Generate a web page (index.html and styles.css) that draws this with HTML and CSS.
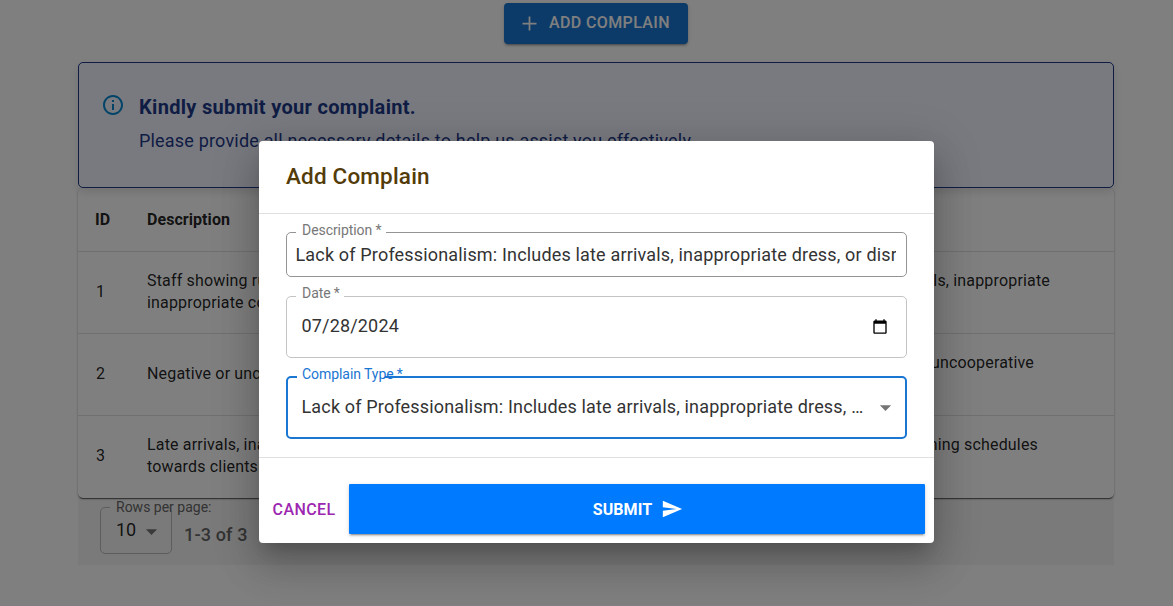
FILE: index.html
```html
<!DOCTYPE html>
<html lang="en">
<head>
<meta charset="utf-8">
<title>Complaints</title>
<link rel="stylesheet" href="styles.css">
</head>
<body>
<main class="page">
  <button class="add-btn"><svg class="plus" viewBox="0 0 24 24"><path d="M20 13h-7v7h-2v-7H4v-2h7V4h2v7h7v2z"/></svg><span>ADD COMPLAIN</span></button>
  <section class="notice">
    <svg class="info" viewBox="0 0 24 24"><path d="M11 7h2v2h-2zm0 4h2v6h-2zm1-9C6.480 2 2 6.480 2 12s4.480 10 10 10 10-4.480 10-10S17.520 2 12 2zm0 18c-4.410 0-8-3.590-8-8s3.590-8 8-8 8 3.590 8 8-3.590 8-8 8z"/></svg>
    <div class="notice-body">
      <h2 class="notice-title">Kindly submit your complaint.</h2>
      <p class="notice-text">Please provide all necessary details to help us assist you effectively.</p>
    </div>
  </section>
  <section class="table">
    <div class="row head"><span>ID</span><span>Description</span></div>
    <div class="row"><span>1</span><span>Staff showing rudeness or<br>inappropriate conduct.</span><span class="type">Includes late arrivals, inappropriate<br>&nbsp;</span></div>
    <div class="row"><span>2</span><span>Negative or uncooperative</span><span class="type type-b">Negative or uncooperative<br>&nbsp;</span></div>
    <div class="row"><span>3</span><span>Late arrivals, inattention<br>towards clients.</span><span class="type type-c">Issues with planning schedules<br>&nbsp;</span></div>
  </section>
  <footer class="pager">
    <div class="rows-select"><span class="rows-notch"></span><span class="rows-label">Rows per page:</span><span>10</span><svg class="arrow" viewBox="0 0 24 24"><path d="M7 10l5 5 5-5z"/></svg></div>
    <span class="range">1-3 of 3</span>
  </footer>
</main>
<div class="backdrop">
  <div class="dialog" role="dialog">
    <h2 class="dialog-title">Add Complain</h2>
    <div class="dialog-body">
      <div class="field desc"><span class="notch"></span><span class="label">Description<i> *</i></span><span class="value">Lack of Professionalism: Includes late arrivals, inappropriate dress, or disrespectful</span></div>
      <div class="field date"><span class="notch"></span><span class="label">Date<i> *</i></span><span class="value">07/28/2024</span><svg class="calendar" viewBox="0 0 24 24"><path d="M20 3h-1V1h-2v2H7V1H5v2H4c-1.100 0-2 .9-2 2v16c0 1.100.9 2 2 2h16c1.100 0 2-.9 2-2V5c0-1.100-.9-2-2-2zm0 18H4V8h16v13z"/></svg></div>
      <div class="field kind"><span class="notch"></span><span class="label">Complain Type<i> *</i></span><span class="value">Lack of Professionalism: Includes late arrivals, inappropriate dress, or disrespectful</span><svg class="arrow" viewBox="0 0 24 24"><path d="M7 10l5 5 5-5z"/></svg></div>
    </div>
    <div class="actions">
      <button class="cancel">CANCEL</button>
      <button class="submit"><span>SUBMIT</span><svg class="send" viewBox="0 0 24 24"><path d="M2.010 21 23 12 2.010 3 2 10l15 2-15 2z"/></svg></button>
    </div>
  </div>
</div>
</body>
</html>
```
FILE: styles.css
```css
* { box-sizing: border-box; }
html { overflow: hidden; }
body {
  margin: 0;
  width: 1192px;
  height: 606px;
  overflow: hidden;
  background: #fff;
  font-family: Roboto, "Liberation Sans", sans-serif;
  color: rgba(0, 0, 0, .87);
}
button { border: 0; padding: 0; font-family: inherit; }
h2, p { margin: 0; }
svg { flex: none; fill: currentColor; }
.page { padding: 3px 78px 0; display: flex; flex-direction: column; width: 1192px; }
.add-btn {
  align-self: center;
  width: 184px;
  height: 41px;
  display: flex;
  align-items: center;
  gap: 9px;
  padding: 0 0 2px 15px;
  background: #1976d2;
  color: #fff;
  border-radius: 4px;
  font-size: 16px;
  font-weight: 500;
  letter-spacing: .38px;
  box-shadow: 0 3px 1px -2px rgba(0,0,0,.2), 0 2px 2px rgba(0,0,0,.14), 0 1px 5px rgba(0,0,0,.12);
}
.plus { width: 21px; height: 21px; margin-top: 2px; }
.notice {
  position: relative;
  z-index: 2;
  margin-top: 18px;
  height: 126px;
  border: 1px solid #1e3a8a;
  border-radius: 5px;
  background: #f3f4ff;
  box-shadow: 0 4px 10px rgba(0, 0, 0, .12);
  padding: 30px 22px;
  display: flex;
  gap: 14px;
}
.info { width: 24px; height: 24px; color: #0288d1; }
.notice-body { color: #1e3a8a; }
.notice-title { font-size: 20px; line-height: 28px; font-weight: 700; letter-spacing: .31px; }
.notice-text { font-size: 18px; line-height: 26px; margin-top: 7px; letter-spacing: .19px; }
.table {
  position: relative;
  z-index: 1;
  height: 310px;
  background: #fff;
  border-radius: 5px;
  box-shadow: 0 2px 1px -1px rgba(0,0,0,.35), 0 1px 1px rgba(0,0,0,.3), 0 1px 3px rgba(0,0,0,.2);
}
.row {
  display: grid;
  grid-template-columns: 51px 510px 1fr;
  align-items: center;
  height: 82px;
  padding: 0 0 2px 18px;
  border-bottom: 1px solid #e0e0e0;
  font-size: 16px;
  line-height: 22px;
  letter-spacing: .17px;
}
.row:last-child { border-bottom: 0; padding-bottom: 3px; }
.head { height: 64px; padding: 0 0 0 17px; grid-template-columns: 52px 1fr; font-weight: 700; letter-spacing: .06px; }
.type { width: 393px; text-align: right; }
.type-b { width: 377px; }
.type-c { width: 381px; }
.pager { height: 67px; background: #f5f5f5; display: flex; padding: 9px 22px 0; gap: 12px; }
.rows-select {
  position: relative;
  z-index: 2;
  width: 72px;
  height: 47px;
  border: 1px solid #bbb;
  border-radius: 5px;
  display: flex;
  align-items: center;
  gap: 2px;
  padding: 0 0 2px 15px;
  font-size: 18px;
}
.rows-select .arrow { margin-top: 4px; }
.rows-notch { position: absolute; top: -1px; left: 9px; width: 58px; height: 1px; background: #f5f5f5; }
.rows-label { position: absolute; left: 15px; top: -10px; font-size: 14px; line-height: 18px; white-space: nowrap; color: #666; letter-spacing: 0; }
.range { font-size: 18px; line-height: 28px; margin-top: 14px; font-weight: 500; color: #666; letter-spacing: .17px; }
.arrow { width: 27px; height: 27px; color: #757575; }

.backdrop { position: absolute; top: 0; left: 0; z-index: 5; width: 1192px; height: 606px; padding: 141px 0 0 259px; background: rgba(0, 0, 0, .5); }
.dialog {
  width: 675px;
  height: 402px;
  border-radius: 4px;
  background: #fff;
  box-shadow: 0 11px 15px -7px rgba(0,0,0,.2), 0 24px 38px 3px rgba(0,0,0,.14), 0 9px 46px 8px rgba(0,0,0,.12);
  display: flex;
  flex-direction: column;
}
.dialog-title { height: 72px; padding: 17px 27px; font-size: 22.5px; line-height: 36px; font-weight: 500; letter-spacing: .17px; color: #533b0a; }
.dialog-body { height: 245px; border: solid #e0e0e0; border-width: 1px 0; padding: 18px 27px 0; display: flex; flex-direction: column; }
.field { position: relative; display: flex; align-items: center; border: 1px solid #c4c4c4; border-radius: 5px; font-size: 18px; letter-spacing: .17px; }
.value { white-space: nowrap; overflow: hidden; color: #333; }
.label { position: absolute; left: 15px; top: -12px; font-size: 14px; line-height: 18px; letter-spacing: -.06px; white-space: nowrap; color: #777; }
.label i { font-style: normal; letter-spacing: -.3px; }
.notch { position: absolute; left: 9px; top: -1px; height: 1px; background: #fff; }
.desc { height: 45px; border-color: #949494; padding: 0 10px 0 8.500px; }
.desc .notch { width: 90px; }
.date { height: 62px; margin-top: 19px; padding: 0 18px 4px 14.500px; justify-content: space-between; }
.date .label { top: -13px; }
.date .notch { width: 48px; }
.calendar { width: 16px; height: 17px; color: #000; margin-top: 3px; }
.kind { height: 63px; margin-top: 18px; border: 2px solid #1976d2; padding: 0 6px 2px 13.500px; }
.kind .notch { left: 9px; top: -2px; width: 88px; height: 2px; }
.kind .label { left: 14px; top: -13px; color: #1976d2; }
.kind .value { width: 562px; text-overflow: ellipsis; }
.kind .arrow { margin: 2px 0 0 8px; }
.actions { display: flex; height: 85px; padding: 26px 9px 9px; gap: 9px; }
.cancel { width: 72px; height: 50px; background: none; color: #9c27b0; font-size: 16px; font-weight: 500; letter-spacing: .4px; }
.submit { flex: 1; height: 50px; padding-left: 2px; background: #007bff; color: #fff; border-radius: 1px; display: flex; align-items: center; justify-content: center; gap: 9px; font-size: 16px; font-weight: 700; letter-spacing: .1px; box-shadow: 0 3px 1px -2px rgba(0,0,0,.2), 0 2px 2px rgba(0,0,0,.14), 0 1px 5px rgba(0,0,0,.12); }
.send { width: 22px; height: 22px; }
```
